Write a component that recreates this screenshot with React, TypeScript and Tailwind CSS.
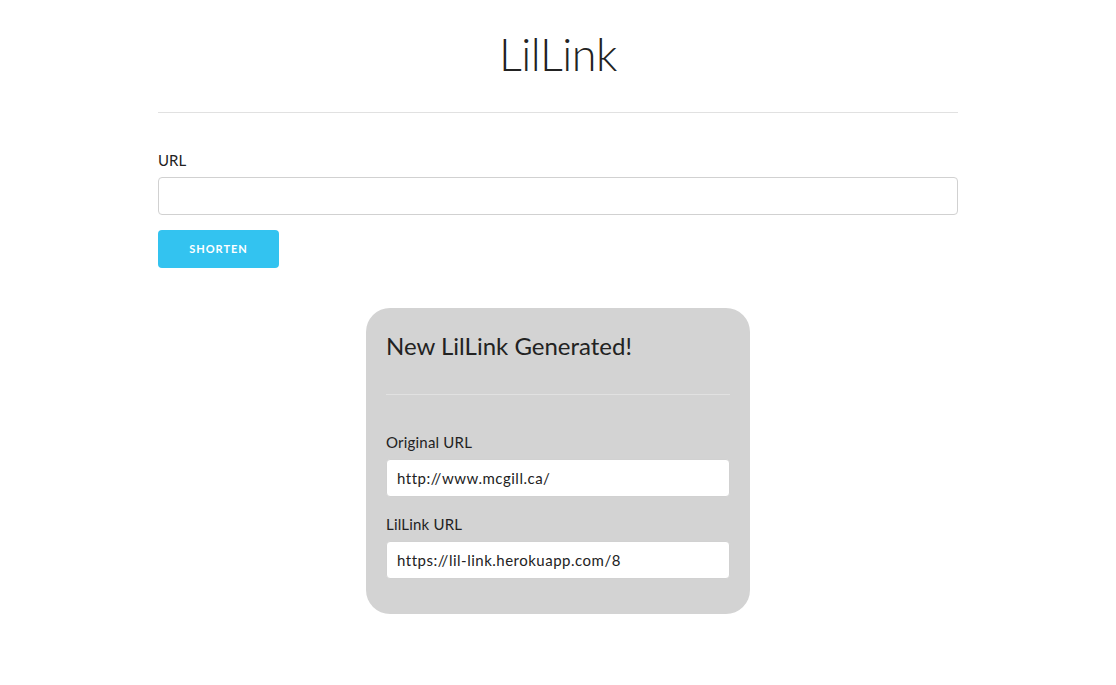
import React, { useState } from "react";

const font = { fontFamily: "Lato, 'Open Sans', sans-serif" };

const App: React.FC = () => {
    const [url, setUrl] = useState<string>('');

    return (
        <div className="min-h-screen bg-white text-[#222]" style={font}>
            <div className="w-[800px] mx-auto pt-[24px]">
                <h1 className="text-center text-[45px] leading-[60px] font-light tracking-[-0.5px]">LilLink</h1>
                <hr className="mt-[28px] mb-[35px] border-0 border-t border-[#e1e1e1]" />

                <form onSubmit={(e) => e.preventDefault()}>
                    <label htmlFor="url" className="block text-[15px] leading-[24px] mb-[5px]">URL</label>
                    <input
                        id="url"
                        type="text"
                        value={url}
                        onChange={(e) => setUrl(e.currentTarget.value)}
                        className="block w-full h-[38px] px-[10px] border border-[#d1d1d1] rounded-[4px] bg-white outline-none mb-[15px]"
                    />
                    <button
                        type="submit"
                        className="h-[38px] w-[121px] rounded-[4px] bg-[#33c3f0] text-white text-[11px] font-bold uppercase tracking-[1px]"
                    >
                        Shorten
                    </button>
                </form>

                <div className="flex justify-center mt-[40px]">
                    <div className="w-[384px] bg-[#d3d3d3] rounded-[24px] p-[20px]">
                        <h5 className="text-[24px] leading-[36px]">New LilLink Generated!</h5>
                        <hr className="mt-[30px] mb-[35px] border-0 border-t border-[#e1e1e1]" />

                        <label className="block text-[15px] leading-[24px] mb-[5px] tracking-[0.2px]">Original URL</label>
                        <input
                            readOnly
                            value="http://www.mcgill.ca/"
                            className="block w-full h-[38px] px-[10px] border border-[#d1d1d1] rounded-[4px] bg-white text-[15px] tracking-[0.5px] outline-none mb-[15px]"
                        />

                        <label className="block text-[15px] leading-[24px] mb-[5px] tracking-[0.2px]">LilLink URL</label>
                        <input
                            readOnly
                            value="https://lil-link.herokuapp.com/8"
                            className="block w-full h-[38px] px-[10px] border border-[#d1d1d1] rounded-[4px] bg-white text-[15px] tracking-[0.5px] outline-none mb-[15px]"
                        />
                    </div>
                </div>
            </div>
        </div>
    );
}

export default App;
